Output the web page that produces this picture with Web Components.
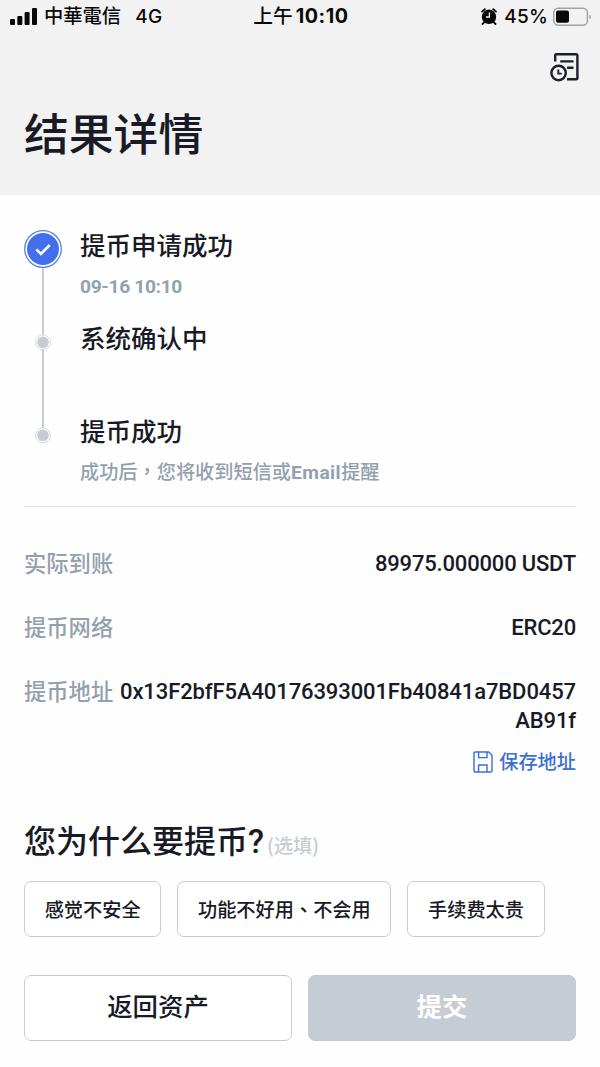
<!DOCTYPE html>
<html lang="zh-CN">
<head>
<meta charset="utf-8">
<title>结果详情</title>
<style>
	body {
		margin: 0;
		background: #fefefe;
		color: #181a25;
		font-family: "Noto Sans CJK SC", sans-serif;
		font-weight: 500;
		--muted: #93a0ae;
		--line: #c6ccd3;
		--latin: Roboto, "Noto Sans CJK SC", sans-serif;
	}
</style>
</head>
<body>
<result-page></result-page>

<template id="StatusBarTemplate">
	<style>
		:host {
			display: grid;
			grid-template-columns: 1fr auto 1fr;
			align-items: center;
			height: 33px;
			padding: 0 9px 0 10px;
			box-sizing: border-box;
			color: #080808;
			font: 500 19px/33px Inter, "Noto Sans CJK TC", sans-serif;
			white-space: nowrap;
		}
		svg { display: block; flex: none; }
		.left, .right { display: flex; align-items: center; }
		.right { justify-content: flex-end; }
		.carrier { margin-left: 7px; font-size: 19.3px; }
		.network { margin-left: 14px; letter-spacing: 0.3px; }
		.clock { font-weight: 700; letter-spacing: 0.6px; margin-left: 3px; }
		.time { padding-left: 1px; font-size: 19.7px; }
		.battery { margin-left: 5px; }
		.percent { margin-left: 7px; letter-spacing: 0.2px; }
	</style>
	<div class="left">
		<svg width="27" height="17" viewBox="0 0 27 17" fill="#080808">
			<rect x="0" y="11" width="5" height="6" rx="1"/>
			<rect x="7.3" y="8" width="5" height="9" rx="1"/>
			<rect x="14.6" y="4" width="5" height="13" rx="1"/>
			<rect x="22" y="0" width="5" height="17" rx="1"/>
		</svg>
		<span class="carrier">中華電信</span>
		<span class="network">4G</span>
	</div>
	<div class="time">上午<span class="clock">10:10</span></div>
	<div class="right">
		<svg width="16" height="17" viewBox="0 0 16 17">
			<path d="M1 3.6 3.8 1.2M15 3.6 12.2 1.2M3.3 14.2 1.5 16M12.7 14.2 14.5 16" stroke="#080808" stroke-width="1.8" stroke-linecap="round"/>
			<circle cx="8" cy="8.8" r="7.2" fill="#080808"/>
			<path d="M8.4 4.6V9H5" fill="none" stroke="#f2f2f2" stroke-width="1.3"/>
		</svg>
		<span class="percent">45%</span>
		<svg class="battery" width="38" height="20" viewBox="0 0 38 20">
			<rect x=".8" y="1.2" width="33.6" height="17" rx="4.5" fill="none" stroke="#a2a2a2" stroke-width="1.4"/>
			<rect x="3" y="3.6" width="13" height="12.2" rx="2" fill="#080808"/>
			<path d="M36.4 7.4Q38 8 38 9.8T36.4 12.2z" fill="#a2a2a2"/>
		</svg>
	</div>
</template>

<template id="PageHeaderTemplate">
	<style>
		:host {
			display: block;
			height: 195px;
			background: #f2f2f2;
		}
		.tools {
			display: flex;
			justify-content: flex-end;
			padding: 19px 19px 0 0;
		}
		h1 {
			margin: 17px 24px 0;
			font-size: 44.8px;
			font-weight: 500;
			line-height: 64px;
		}
	</style>
	<status-bar></status-bar>
	<div class="tools">
		<svg width="32" height="31" viewBox="0 0 32 31" fill="none" stroke="#1d1f2b" stroke-width="2.4">
			<path d="M6.2 9.5V3.5Q6.2 2.2 7.5 2.2H27Q28.4 2.2 28.4 3.5V26Q28.4 27.3 27 27.3H18"/>
			<path d="M12.2 9.4H23.5M19 15.8H23.5" stroke-linecap="round"/>
			<circle cx="9.6" cy="21" r="7.2"/>
			<path d="M9.3 17.6V21.6H12.8" stroke-width="1.9"/>
		</svg>
	</div>
	<h1><slot></slot></h1>
</template>

<template id="ProgressStepTemplate">
	<style>
		:host {
			display: flex;
			gap: 18px;
			height: 92.75px;
		}
		.rail {
			flex: none;
			width: 38px;
			background: linear-gradient(var(--line), var(--line)) no-repeat 18px 0 / 2px 100%;
		}
		:host([first]) .rail { background-position: 18px 19px; }
		:host([last]) .rail { background-size: 2px 19px; }
		:host([last]) { height: 90px; }
		svg { display: block; }
		.done { display: none; }
		:host([first]) .done { display: block; }
		:host([first]) .todo { display: none; }
		.title { font-size: 25.5px; line-height: 28px; height: 30px; }
		.note {
			margin-top: 9px;
			color: var(--muted);
			font-size: 19.2px;
			line-height: 32px;
			white-space: nowrap;
		}
	</style>
	<div class="rail">
		<svg class="done" width="38" height="38" viewBox="0 0 38 38">
			<circle cx="19" cy="19" r="18.3" fill="#fff" stroke="#5484e4" stroke-width="1.3"/>
			<circle cx="19" cy="19" r="16" fill="#416fed"/>
			<path d="M12.4 19.5 17 24 25.7 15" fill="none" stroke="#fff" stroke-width="2.6"/>
		</svg>
		<svg class="todo" width="38" height="38" viewBox="0 0 38 38">
			<circle cx="19" cy="19.3" r="7.4" fill="#fefefe" stroke="#d5dade"/>
			<circle cx="19" cy="19.3" r="5.8" fill="#c6ccd2"/>
		</svg>
	</div>
	<div>
		<div class="title"><slot></slot></div>
		<div class="note"><slot name="note"></slot></div>
	</div>
</template>

<template id="DetailRowTemplate">
	<style>
		:host {
			display: flex;
			justify-content: space-between;
			line-height: 29px;
		}
		.label {
			flex: none;
			height: 29px;
			color: var(--muted);
			font-size: 22.3px;
			line-height: 26px;
		}
		.value {
			font-family: var(--latin);
			font-size: 22px;
			text-align: right;
			letter-spacing: var(--value-spacing, -0.18px);
		}
	</style>
	<div class="label"></div>
	<div class="value"><slot></slot></div>
</template>

<template id="SaveLinkTemplate">
	<style>
		:host {
			display: flex;
			justify-content: flex-end;
			align-items: center;
			gap: 6px;
			height: 28px;
			color: #3b6fd4;
			font-size: 19.2px;
			line-height: 26px;
		}
		span { height: 28px; }
	</style>
	<svg width="20" height="22" viewBox="0 0 20 22" fill="none" stroke="#3b6fd4" stroke-width="1.4">
		<path d="M1 2.2Q1 1 2.2 1H15.8L19 4.2V19.8Q19 21 17.8 21H2.2Q1 21 1 19.8z"/>
		<path d="M5.6 1V6.6H14V1M5.6 21V14H14V21"/>
	</svg>
	<span><slot></slot></span>
</template>

<template id="ReasonChipTemplate">
	<style>
		:host {
			display: block;
			box-sizing: border-box;
			height: 56px;
			padding: 0 19.7px;
			border: 1.5px solid var(--line);
			border-radius: 7px;
			background: #fff;
			font-size: 19.2px;
			line-height: 54px;
			white-space: nowrap;
		}
	</style>
	<slot></slot>
</template>

<template id="ActionButtonTemplate">
	<style>
		:host {
			display: block;
			flex: 1;
			box-sizing: border-box;
			height: 66px;
			border: 1.5px solid var(--line);
			border-radius: 7px;
			background: #fff;
			font-size: 25.4px;
			line-height: 58px;
			text-align: center;
		}
		:host([disabled]) {
			border-color: #c6ccd3;
			background: #c6ccd3;
			color: #fff;
			font-weight: 700;
		}
	</style>
	<slot></slot>
</template>

<template id="ResultPageTemplate">
	<style>
		:host { display: block; }
		main { padding: 35px 24px 0; }
		.latin { font-family: var(--latin); font-weight: 700; letter-spacing: 0.45px; }
		.date { font-size: 19.2px; letter-spacing: -0.35px; font-family: var(--latin); font-weight: 700; }
		.tc { font-family: "Noto Sans CJK TC", sans-serif; }
		.details {
			display: grid;
			gap: 35px;
			padding-top: 42px;
			border-top: 1.5px solid #e4e7e9;
		}
		.wide { --value-spacing: -0.1px; }
		save-link { margin-top: 13px; }
		h2 {
			display: flex;
			align-items: baseline;
			height: 46px;
			margin: 40px 0 0;
			font-size: 32px;
			font-weight: 500;
			line-height: 46px;
		}
		.mark { font-family: Roboto, sans-serif; font-size: 33px; }
		small { margin-left: 3px; color: var(--line); font-size: 19.2px; line-height: 46px; }
		.chips { display: flex; gap: 16px; margin-top: 19px; }
		.actions { display: flex; gap: 16px; margin-top: 38px; }
	</style>
	<page-header>结果详情</page-header>
	<main>
		<progress-step first>提币申请成功<span slot="note" class="date">09-16 10:10</span></progress-step>
		<progress-step>系统确认中</progress-step>
		<progress-step last>提币成功<span slot="note">成功后<span class="tc" lang="zh-TW">，</span>您将收到短信或<span class="latin">Email</span>提醒</span></progress-step>
		<div class="details">
			<detail-row label="实际到账">89975.000000 USDT</detail-row>
			<detail-row label="提币网络">ERC20</detail-row>
			<detail-row class="wide" label="提币地址">0x13F2bfF5A40176393001Fb40841a7BD0457<br>AB91f</detail-row>
		</div>
		<save-link>保存地址</save-link>
		<h2>您为什么要提币<span class="mark">?</span><small>(选填)</small></h2>
		<div class="chips">
			<reason-chip>感觉不安全</reason-chip>
			<reason-chip>功能不好用<span class="tc" lang="zh-TW">、</span>不会用</reason-chip>
			<reason-chip>手续费太贵</reason-chip>
		</div>
		<div class="actions">
			<action-button>返回资产</action-button>
			<action-button disabled>提交</action-button>
		</div>
	</main>
</template>

<script>
	class TemplateElement extends HTMLElement {
		constructor(id) {
			super();
			const template = document.querySelector(id);
			this.attachShadow({mode: 'open'});
			this.shadowRoot.appendChild(template.content.cloneNode(true));
		}
	}

	class StatusBar extends TemplateElement {
		constructor() { super('#StatusBarTemplate'); }
	}

	class PageHeader extends TemplateElement {
		constructor() { super('#PageHeaderTemplate'); }
	}

	class ProgressStep extends TemplateElement {
		constructor() { super('#ProgressStepTemplate'); }
	}

	class DetailRow extends TemplateElement {
		constructor() { super('#DetailRowTemplate'); }

		static get observedAttributes() {
			return ['label'];
		}

		attributeChangedCallback(name, oldValue, newValue) {
			this.shadowRoot.querySelector('.label').textContent = newValue;
		}
	}

	class SaveLink extends TemplateElement {
		constructor() { super('#SaveLinkTemplate'); }
	}

	class ReasonChip extends TemplateElement {
		constructor() { super('#ReasonChipTemplate'); }
	}

	class ActionButton extends TemplateElement {
		constructor() { super('#ActionButtonTemplate'); }
	}

	class ResultPage extends TemplateElement {
		constructor() { super('#ResultPageTemplate'); }
	}

	window.customElements.define('status-bar', StatusBar);
	window.customElements.define('page-header', PageHeader);
	window.customElements.define('progress-step', ProgressStep);
	window.customElements.define('detail-row', DetailRow);
	window.customElements.define('save-link', SaveLink);
	window.customElements.define('reason-chip', ReasonChip);
	window.customElements.define('action-button', ActionButton);
	window.customElements.define('result-page', ResultPage);
</script>
</body>
</html>
